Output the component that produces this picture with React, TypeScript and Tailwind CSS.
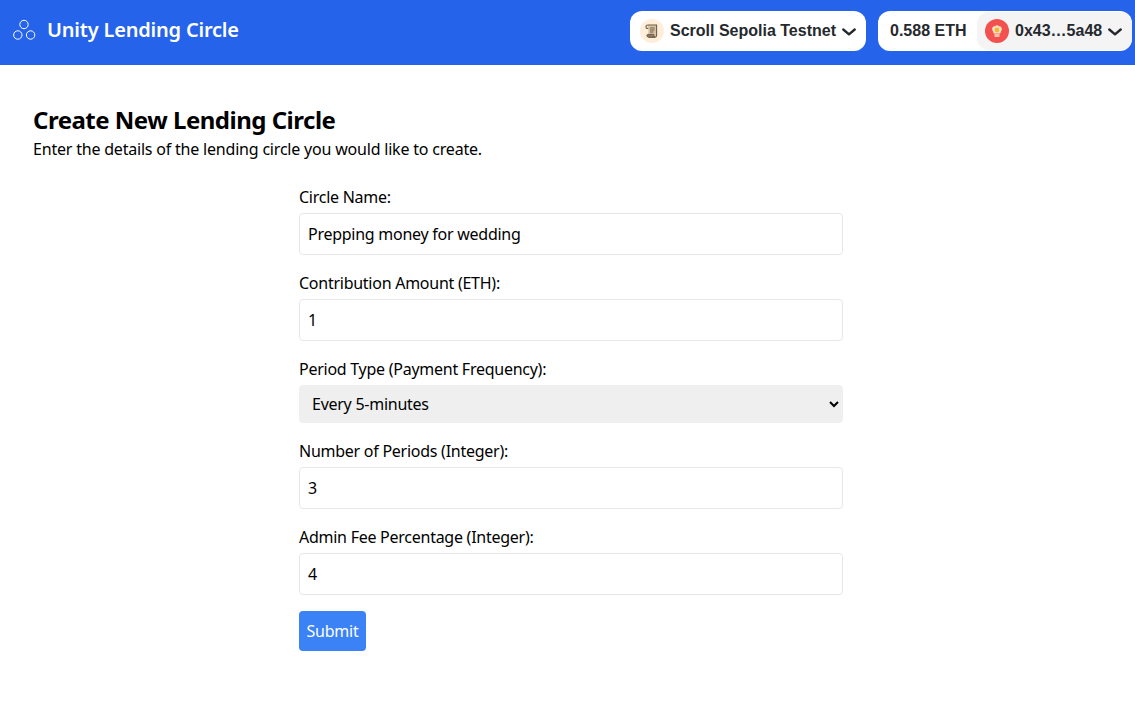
import { ChangeEvent, useState } from 'react';

const FONT = "font-['Noto_Sans',sans-serif]";
const NAV_FONT = "font-['Liberation_Sans',Arial,sans-serif]";

function CirclesLogo() {
  return (
    <svg className="h-6 w-6 text-white" fill="none" height="24" stroke="currentColor" strokeWidth="1" viewBox="0 0 24 24" width="24">
      <circle cx="12" cy="5.5" r="4.2" />
      <circle cx="5.8" cy="16" r="4.2" />
      <circle cx="18.6" cy="16" r="4.2" />
    </svg>
  );
}

function Chevron() {
  return (
    <svg className="mt-px h-2 w-3.5 text-[#25292e]" fill="none" height="8" stroke="currentColor" strokeLinecap="round" strokeLinejoin="round" strokeWidth="2.4" viewBox="0 0 14 8" width="14">
      <path d="M1.3 1.5 7 6.3l5.7-4.8" />
    </svg>
  );
}

function ScrollIcon() {
  return (
    <span className="flex h-6 w-6 items-center justify-center rounded-full bg-[#ffeeda]">
      <svg fill="none" height="16" viewBox="0 0 16 16" width="16">
        <path d="M4 2h8.6v10.6c0 .9-.6 1.6-1.5 1.6H4.6" fill="#d9c3a5" stroke="#6b5d4c" strokeWidth="1.1" />
        <path d="M4 2C2.9 2 2 2.8 2 3.9c0 .8.5 1.4 1.2 1.5h1" stroke="#6b5d4c" strokeWidth="1.1" />
        <path d="M4.6 14.2c-1 0-1.7-.7-1.7-1.6 0-.7.4-1.2 1-1.2h5.9c0 1.2.4 2.8 1.3 2.8z" fill="#8d7b65" stroke="#6b5d4c" strokeWidth="1" />
        <path d="M6 5h4.6M6 7h4.6M6 9h3.4" stroke="#6b5d4c" strokeWidth="1" />
      </svg>
    </span>
  );
}

function AccountAvatar() {
  return (
    <span className="flex h-6 w-6 items-center justify-center rounded-full bg-[#f2514f]">
      <svg height="16" viewBox="0 0 16 16" width="16">
        <path d="M3.4 7C2.4 4.6 4.6 2.8 6.2 3.3 7 2 9 2 9.8 3.3 11.4 2.8 13.6 4.6 12.6 7l-1.4 3.4H4.8z" fill="#ffe3c0" />
        <circle cx="8" cy="7" fill="#e8b93a" r="2.4" />
        <rect fill="#ffc4a8" height="3.2" rx=".6" width="5" x="5.5" y="10.8" />
      </svg>
    </span>
  );
}

function Header() {
  return (
    <header className="flex h-[65px] items-center justify-between bg-[#2563eb] pb-[3px] pl-3 pr-[3px]">
      <div className="flex items-center gap-[11px]">
        <CirclesLogo />
        <span className={`${FONT} -mt-[2px] text-xl font-semibold tracking-[-0.2px] text-white`}>Unity Lending Circle</span>
      </div>
      <div className={`${NAV_FONT} flex items-center gap-3 text-base font-bold text-[#25292e]`}>
        <button className="flex h-10 w-[236px] items-center rounded-xl bg-white pl-2.5" type="button">
          <ScrollIcon />
          <span className="ml-1.5">Scroll Sepolia Testnet</span>
          <span className="ml-1.5">
            <Chevron />
          </span>
        </button>
        <div className="flex h-10 w-[254px] items-center rounded-xl bg-white pl-3">
          <span className="w-[87px]">0.588 ETH</span>
          <button className="flex h-[38px] flex-1 items-center rounded-xl bg-[#f4f4f5] pl-2" type="button">
            <AccountAvatar />
            <span className="ml-1.5">0x43…5a48</span>
            <span className="ml-1.5">
              <Chevron />
            </span>
          </button>
        </div>
      </div>
    </header>
  );
}

const INPUT_CLASS = 'h-[42px] w-full rounded border border-[#e5e7eb] bg-white px-2 text-base text-black outline-none';

export default function App() {
  const [name, setName] = useState('Prepping money for wedding');
  const [amount, setAmount] = useState('1');
  const [periods, setPeriods] = useState('3');
  const [fee, setFee] = useState('4');

  const fields = {
    name: (event: ChangeEvent<HTMLInputElement>) => setName(event.target.value),
    amount: (event: ChangeEvent<HTMLInputElement>) => setAmount(event.target.value),
    periods: (event: ChangeEvent<HTMLInputElement>) => setPeriods(event.target.value),
    fee: (event: ChangeEvent<HTMLInputElement>) => setFee(event.target.value),
  };

  return (
    <div className={`${FONT} min-h-[715px] bg-white text-black`}>
      <Header />
      <main className="px-[33px] pt-[39px]">
        <h1 className="text-2xl leading-8 font-bold tracking-[-0.5px]">Create New Lending Circle</h1>
        <p className="pt-px text-base leading-6 tracking-[-0.2px]">Enter the details of the lending circle you would like to create.</p>
        <form className="ml-[266px] mt-[24px] flex w-[544px] flex-col gap-4 tracking-[-0.26px]">
          <label className="block">
            <span className="block leading-6 mb-1">Circle Name:</span>
            <input className={INPUT_CLASS} onChange={fields.name} value={name} />
          </label>
          <label className="block">
            <span className="block leading-6 mb-1">Contribution Amount (ETH):</span>
            <input className={INPUT_CLASS} onChange={fields.amount} value={amount} />
          </label>
          <label className="block">
            <span className="block leading-6 mb-1">Period Type (Payment Frequency):</span>
            <select className="h-[38px] w-full rounded border border-[#efefef] bg-[#efefef] px-2 text-base text-black outline-none" defaultValue="5">
              <option value="5">Every 5-minutes</option>
            </select>
          </label>
          <label className="block">
            <span className="block leading-6 mb-1">Number of Periods (Integer):</span>
            <input className={INPUT_CLASS} onChange={fields.periods} value={periods} />
          </label>
          <label className="block">
            <span className="block leading-6 mb-1">Admin Fee Percentage (Integer):</span>
            <input className={INPUT_CLASS} onChange={fields.fee} value={fee} />
          </label>
          <div>
            <button className="h-10 w-[67px] rounded bg-[#3b82f6] text-base text-white" type="button">
              Submit
            </button>
          </div>
        </form>
      </main>
    </div>
  );
}
